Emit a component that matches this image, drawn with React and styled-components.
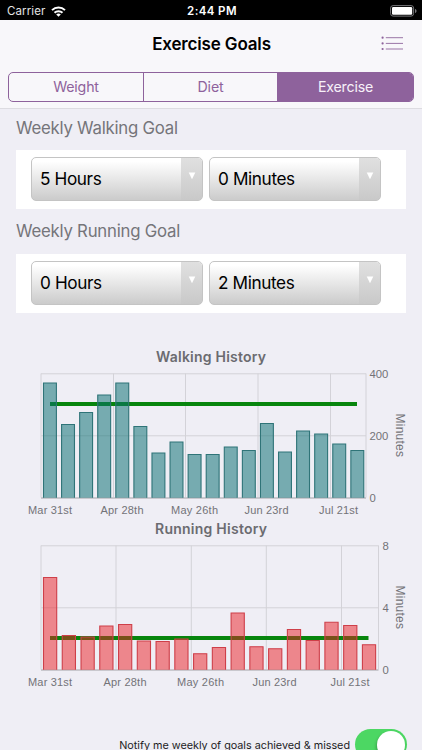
import React from "react";
import styled, { createGlobalStyle } from "styled-components";

const Global = createGlobalStyle`
  * { box-sizing: border-box; }
  html, body { margin: 0; height: 750px; overflow: hidden; }
  body { background: #efeef5; font-family: Inter, "Liberation Sans", sans-serif; }
`;

const Screen = styled.main`
  width: 422px;
  height: 750px;
  overflow: hidden;
  display: flex;
  flex-direction: column;
  background: #efeef5;
`;

const StatusBar = styled.div`
  height: 20px;
  flex: none;
  display: grid;
  grid-template-columns: 1fr auto 1fr;
  align-items: center;
  padding: 2px 5px 0 7px;
  background: #000;
  color: #fff;
  font-size: 11.5px;
  line-height: 18px;
`;

const Carrier = styled.div`
  display: flex;
  align-items: center;
  gap: 6px;
  color: #e4e4e4;
  letter-spacing: 0.1px;
`;

const Clock = styled.div`
  font-weight: 600;
  letter-spacing: 0.4px;
`;

const Battery = styled.svg`
  justify-self: end;
`;

const Header = styled.header`
  height: 89px;
  flex: none;
  padding: 0 8px;
  background: #f8f7fa;
  border-bottom: 1px solid #dddce1;
`;

const TitleRow = styled.div`
  height: 52px;
  display: grid;
  grid-template-columns: 1fr auto 1fr;
  align-items: center;
  padding: 0 11px 5px 12px;
`;

const Title = styled.h1`
  grid-column: 2;
  margin: 0;
  font-size: 17px;
  line-height: 22px;
  font-weight: 600;
  color: #000;
  letter-spacing: -0.16px;
`;

const MenuIcon = styled.svg`
  justify-self: end;
`;

const Segments = styled.div`
  display: grid;
  grid-template-columns: 135px 134px 1fr;
  height: 30px;
  border: 1px solid #8e629c;
  border-radius: 5px;
  overflow: hidden;
`;

const Segment = styled.button`
  border: 0;
  border-right: ${(p) => (p.$last ? 0 : "1px solid #8e629c")};
  padding: 0 0 1px;
  background: ${(p) => (p.$active ? "#8e629c" : "transparent")};
  color: ${(p) => (p.$active ? "#f7f1f9" : "#8e629c")};
  font: 400 14.2px/28px Inter, sans-serif;
  letter-spacing: -0.18px;
`;

const Label = styled.h2`
  margin: ${(p) => p.$top}px 0 0 16px;
  height: 24px;
  flex: none;
  font-size: 16.8px;
  line-height: 24px;
  font-weight: 400;
  color: #75757a;
  letter-spacing: -0.24px;
`;

const Card = styled.section`
  flex: none;
  height: 59px;
  margin: ${(p) => p.$top}px 16px 0;
  padding: 7px 25px 0 15px;
  display: grid;
  grid-template-columns: 1fr 1fr;
  gap: 6px;
  background: #fff;
`;

const Select = styled.button`
  height: 44px;
  display: flex;
  padding: 0;
  border: 1px solid #c4c4c4;
  border-radius: 5px;
  overflow: hidden;
  background: linear-gradient(#fff 8%, #cbcbcb);
`;

const Value = styled.span`
  flex: 1;
  padding-left: 8px;
  text-align: left;
  font: 400 17.2px/42px Inter, sans-serif;
  letter-spacing: -0.38px;
  color: #000;
`;

const Arrow = styled.span`
  width: 21px;
  display: flex;
  justify-content: center;
  padding-top: 14px;
  background: linear-gradient(#e0e0e0, #c9c9c9);
`;

const Chart = styled.svg`
  display: block;
  flex: none;
  margin-top: ${(p) => p.$top}px;
`;

const Notify = styled.div`
  display: flex;
  justify-content: flex-end;
  align-items: center;
  gap: 5px;
  height: 31px;
  flex: none;
  margin-top: 40px;
  padding-right: 15px;
  font-size: 10.8px;
  letter-spacing: -0.01px;
  color: #1c1c1e;
`;

const NotifyText = styled.span`
  padding-top: 2px;
  white-space: nowrap;
`;

const Toggle = styled.div`
  width: 52px;
  height: 31px;
  padding: 2px;
  display: flex;
  justify-content: flex-end;
  border-radius: 16px;
  background: #4cd763;
`;

const Knob = styled.div`
  width: 28px;
  height: 28px;
  border-radius: 50%;
  background: #fff;
  box-shadow: -1px 2px 3px rgba(0, 0, 0, 0.25);
`;

const walking = {
  title: "Walking History",
  titleX: 156, titleW: 110,
  right: 366, lineEnd: 357, pitch: 18.08, barWidth: 12.9, lineY: 59,
  stroke: "#2f7478", fill: "rgba(12,112,116,.53)",
  scale: ["400", "200", "0"],
  scaleX: 369.5,
  tops: [38, 79.5, 67.5, 50, 38, 81.5, 108, 97, 109.5, 109.5, 102, 105.5, 78.5, 107, 86, 89, 99, 105.5],
  grid: [41, 113.5, 185.5, 258, 330.5, 366],
  labels: [["Mar 31st", 28, 44], ["Apr 28th", 100.5, 43], ["May 26th", 171, 47], ["Jun 23rd", 244.5, 44], ["Jul 21st", 319, 39]],
};

const running = {
  title: "Running History",
  titleX: 155, titleW: 112,
  right: 378.5, lineEnd: 368.5, pitch: 18.76, barWidth: 13.2, lineY: 121,
  stroke: "#ce3f49", fill: "rgba(235,30,35,.5)",
  scale: ["8", "4", "0"],
  scaleX: 382.5,
  tops: [60.5, 118.5, 120, 109, 107.5, 124, 124.5, 122, 136.7, 130.5, 96, 129.7, 131.7, 112.5, 123.5, 105.3, 108.5, 127.7],
  grid: [41, 116, 191.3, 266.3, 341.5, 378.5],
  labels: [["Mar 31st", 28, 44], ["Apr 28th", 103.5, 43], ["May 26th", 177, 47], ["Jun 23rd", 252.5, 44], ["Jul 21st", 330.5, 39]],
};

function History({ data, top }) {
  const base = 152.8;
  return (
    <Chart $top={top} width="422" height="172" viewBox="0 0 422 172">
      <text x={data.titleX} y="17" textLength={data.titleW} fontFamily="Inter" fontWeight="600" fontSize="14" fill="#6b6b70">{data.title}</text>
      <g stroke="#d3d2d8" strokeWidth="1">
        {data.grid.map((x) => <line key={x} x1={x} x2={x} y1="28.5" y2="152.5" />)}
        <line x1="41" x2={data.right} y1="28.8" y2="28.8" />
        <line x1="41" x2={data.right} y1="90.8" y2="90.8" />
      </g>
      <line x1="41" x2={data.right} y1="153" y2="153" stroke="#bcbbc1" strokeWidth="1.6" />
      <line x1="50" x2={data.lineEnd} y1={data.lineY} y2={data.lineY} stroke="#07850d" strokeWidth="4" />
      {data.tops.map((y, i) => {
        const x = 43.5 + i * data.pitch;
        const right = x + data.barWidth;
        return (
          <path key={i} d={`M${x} ${base}V${y}H${right}V${base}`} fill={data.fill} stroke={data.stroke} strokeWidth="1.1" />
        );
      })}
      <g fontFamily="Liberation Sans" fontSize="11" fill="#737378">
        {data.labels.map(([text, x, width]) => <text key={text} x={x} y="169.3" textLength={width}>{text}</text>)}
      </g>
      <g fontFamily="Liberation Sans" fontSize="11.3" fill="#737378">
        {data.scale.map((text, i) => (
          <text key={text} x={data.scaleX} y={32.5 + i * 62}>{text}</text>
        ))}
      </g>
      <text transform="translate(396 68.5) rotate(90)" textLength="43.5" fontFamily="Liberation Sans" fontSize="12" fill="#737378">Minutes</text>
    </Chart>
  );
}

function Picker({ value }) {
  return (
    <Select>
      <Value>{value}</Value>
      <Arrow>
        <svg width="8" height="8" viewBox="0 0 8 8"><path d="M.7.5h6.6L4 7.3z" fill="#fff" /></svg>
      </Arrow>
    </Select>
  );
}

export default function App() {
  return (
    <Screen>
      <Global />
      <StatusBar>
        <Carrier>
          Carrier
          <svg width="15" height="11" viewBox="0 0 15 11" fill="none" stroke="#fff" strokeWidth="2">
            <path d="M1 4.1a9.4 9.4 0 0 1 13 0M3.5 6.8a5.8 5.8 0 0 1 8 0" />
            <path d="M7.5 10.8 5.2 8.5a3.4 3.4 0 0 1 4.6 0z" fill="#fff" stroke="none" />
          </svg>
        </Carrier>
        <Clock>2:44 PM</Clock>
        <Battery width="27" height="12" viewBox="0 0 27 12">
          <rect x=".6" y=".6" width="23" height="10.5" rx="2.5" fill="none" stroke="#77777a" />
          <rect x="2" y="2" width="20.2" height="7.7" rx="1.2" fill="#fff" />
          <path d="M25 4c2 .5 2 3.5 0 4z" fill="#77777a" />
        </Battery>
      </StatusBar>
      <Header>
        <TitleRow>
          <Title>Exercise Goals</Title>
          <MenuIcon width="22" height="15" viewBox="0 0 22 15">
            <path d="M4.8 1.7H22M4.8 7.4H22M4.8 13H22" stroke="#9a75a6" />
            <g fill="#8e629c"><circle cx="1.6" cy="1.7" r="1.1" /><circle cx="1.6" cy="7.4" r="1.1" /><circle cx="1.6" cy="13" r="1.1" /></g>
          </MenuIcon>
        </TitleRow>
        <Segments>
          <Segment>Weight</Segment>
          <Segment>Diet</Segment>
          <Segment $active $last>Exercise</Segment>
        </Segments>
      </Header>
      <Label $top={7}>Weekly Walking Goal</Label>
      <Card $top={10}>
        <Picker value="5 Hours" />
        <Picker value="0 Minutes" />
      </Card>
      <Label $top={10}>Weekly Running Goal</Label>
      <Card $top={11}>
        <Picker value="0 Hours" />
        <Picker value="2 Minutes" />
      </Card>
      <History data={walking} top={32} />
      <History data={running} top={0} />
      <Notify>
        <NotifyText>Notify me weekly of goals achieved &amp; missed</NotifyText>
        <Toggle role="switch" aria-checked="true"><Knob /></Toggle>
      </Notify>
    </Screen>
  );
}
